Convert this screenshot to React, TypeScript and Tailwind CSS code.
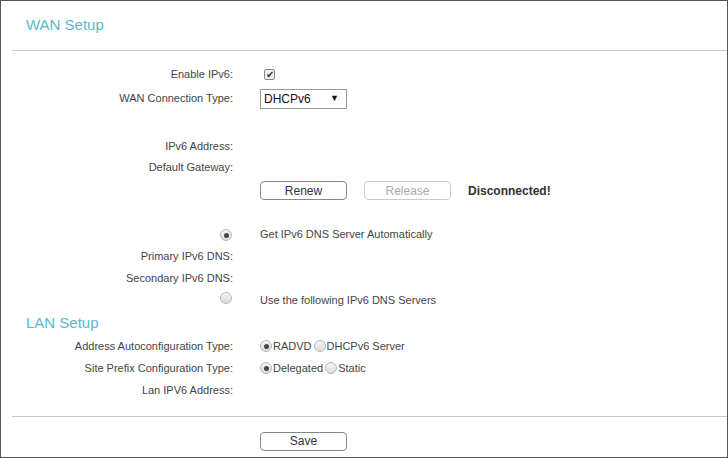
export default function App() {
  const Row = ({ label, h, children, mt = "" }: { label?: string; h: string; children?: React.ReactNode; mt?: string }) => (
    <div className={`flex items-center ${h} ${mt}`}>
      <div className="w-[232px] shrink-0 text-right">{label}</div>
      <div className="ml-[27px] flex items-center">{children}</div>
    </div>
  );
  const Radio = ({ on }: { on?: boolean }) => (
    <span className="inline-flex w-[12px] h-[12px] rounded-full border border-[#b5b5b5] bg-gradient-to-b from-[#f4f4f4] to-[#dcdcdc] items-center justify-center">
      {on && <span className="w-[5px] h-[5px] rounded-full bg-[#444]" />}
    </span>
  );
  const Btn = ({ t, dis }: { t: string; dis?: boolean }) => (
    <div className={`w-[87px] h-[19px] rounded-[4px] border flex items-center justify-center bg-white text-[12px] ${dis ? "border-[#ccc] text-[#aaa]" : "border-[#888] text-[#333]"}`}>{t}</div>
  );
  return (
    <div className="w-[728px] h-[458px] border border-[#555] bg-white text-[11px] text-[#444] overflow-hidden" style={{ fontFamily: "Arial, 'Liberation Sans', sans-serif" }}>
      <div className="h-[49px] pl-[25px] pt-[13px] text-[15px] text-[#5bb8cb]">WAN Setup</div>
      <div className="ml-[11px] h-px bg-[#ccc]" />
      <Row label="Enable IPv6:" h="h-[23px]" mt="mt-[12px]">
        <span className="w-[11px] h-[11px] ml-[4px] border border-[#888] rounded-[2px] bg-[#eee] flex items-center justify-center text-[10px] leading-none text-[#333]">✔</span>
      </Row>
      <Row label="WAN Connection Type:" h="h-[25px]">
        <div className="w-[87px] h-[20px] border border-[#999] flex items-center justify-between px-[3px] text-[12px] text-[#111]">
          <span>DHCPv6</span><span className="text-[9px] mr-[4px]">▼</span>
        </div>
      </Row>
      <Row label="IPv6 Address:" h="h-[21px]" mt="mt-[25px]" />
      <Row label="Default Gateway:" h="h-[21px]" />
      <Row h="h-[25px]">
        <Btn t="Renew" />
        <div className="ml-[17px]"><Btn t="Release" dis /></div>
        <span className="ml-[17px] font-bold text-[12px] text-[#333]">Disconnected!</span>
      </Row>
      <Row h="h-[22px]" mt="mt-[20px]">
        <div className="-ml-[40px] mr-[28px]"><Radio on /></div>
        <span>Get IPv6 DNS Server Automatically</span>
      </Row>
      <Row label="Primary IPv6 DNS:" h="h-[22px]" />
      <Row label="Secondary IPv6 DNS:" h="h-[22px]" />
      <Row h="h-[22px]">
        <div className="-ml-[40px] mr-[28px]"><Radio /></div>
        <span>Use the following IPv6 DNS Servers</span>
      </Row>
      <div className="h-[24px] pl-[25px] flex items-center text-[15px] text-[#5bb8cb]">LAN Setup</div>
      <Row label="Address Autoconfiguration Type:" h="h-[22px]">
        <Radio on /><span className="ml-[1px] mr-[2px]">RADVD</span><Radio /><span className="ml-[1px]">DHCPv6 Server</span>
      </Row>
      <Row label="Site Prefix Configuration Type:" h="h-[22px]">
        <Radio on /><span className="ml-[1px] mr-[2px]">Delegated</span><Radio /><span className="ml-[1px]">Static</span>
      </Row>
      <Row label="Lan IPV6 Address:" h="h-[22px]" />
      <div className="ml-[11px] mt-[15px] h-px bg-[#ccc]" />
      <Row h="h-[24px]" mt="mt-[12px]"><Btn t="Save" /></Row>
    </div>
  );
}
